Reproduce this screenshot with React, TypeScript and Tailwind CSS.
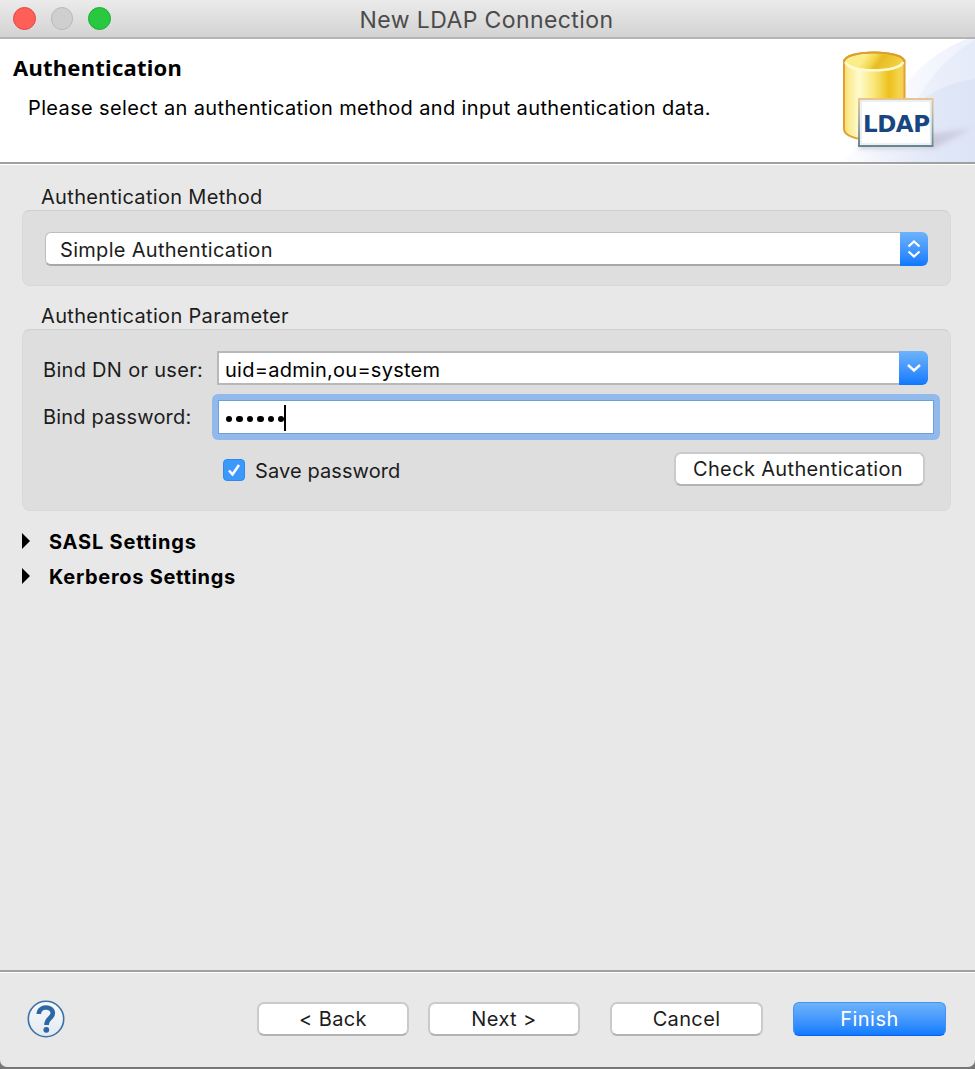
import React from "react";

function LdapBanner() {
  return (
    <svg width="200" height="123" viewBox="0 0 200 123" className="block">
      <defs>
        <linearGradient id="swoosh" gradientUnits="userSpaceOnUse" x1="70" y1="0" x2="200" y2="0">
          <stop offset="0" stopColor="#ffffff" />
          <stop offset="0.5" stopColor="#f7f9fe" />
          <stop offset="1" stopColor="#edf1fb" />
        </linearGradient>
        <linearGradient id="swoosh2" gradientUnits="userSpaceOnUse" x1="90" y1="0" x2="200" y2="0">
          <stop offset="0" stopColor="#e3e9f8" stopOpacity="0" />
          <stop offset="1" stopColor="#e3e9f8" />
        </linearGradient>
        <linearGradient id="swoosh3" gradientUnits="userSpaceOnUse" x1="60" y1="0" x2="190" y2="0">
          <stop offset="0" stopColor="#dae2f5" stopOpacity="0" />
          <stop offset="1" stopColor="#dae2f5" />
        </linearGradient>
        <linearGradient id="body" x1="0" x2="1">
          <stop offset="0" stopColor="#f8dd6c" />
          <stop offset="0.08" stopColor="#fbeb92" />
          <stop offset="0.25" stopColor="#fffbcf" />
          <stop offset="0.5" stopColor="#f9e678" />
          <stop offset="0.75" stopColor="#edc01c" />
          <stop offset="0.9" stopColor="#f5d34a" />
          <stop offset="1" stopColor="#f3cf58" />
        </linearGradient>
        <linearGradient id="lid" x1="0" x2="1" y1="0.3" y2="0.5">
          <stop offset="0" stopColor="#fbee8a" />
          <stop offset="0.3" stopColor="#fbee8a" />
          <stop offset="0.48" stopColor="#f3d84c" />
          <stop offset="0.6" stopColor="#e8bb22" />
          <stop offset="1" stopColor="#f4d544" />
        </linearGradient>
        <linearGradient id="card" x1="0" x2="0" y1="0" y2="1">
          <stop offset="0" stopColor="#e9c48f" />
          <stop offset="0.45" stopColor="#a9b3a6" />
          <stop offset="1" stopColor="#68878b" />
        </linearGradient>
        <linearGradient id="shade" x1="0" x2="1">
          <stop offset="0" stopColor="#9d98b0" />
          <stop offset="1" stopColor="#b9b0c8" stopOpacity="0.4" />
        </linearGradient>
        <filter id="soft" x="-30%" y="-60%" width="160%" height="220%">
          <feGaussianBlur stdDeviation="2.5" />
        </filter>
      </defs>
      <path d="M200 0H192C165 10 140 29 126 54L60 123H200Z" fill="url(#swoosh)" />
      <path d="M200 1C175 14 148 44 134 76L90 123H200Z" fill="url(#swoosh2)" opacity="0.8" />
      <path d="M200 40C174 43 150 55 133 72L64 123H200Z" fill="url(#swoosh3)" opacity="0.75" />
      <path d="M155 95L196 89L182 98L160 109H84V106H150Z" fill="url(#shade)" opacity="0.8" filter="url(#soft)" />
      <path d="M69 23C69 17 82 13.500 99 13.500S129.500 17 129.500 23V91C129 98 116 101 99 101S69 97 69 90Z" fill="url(#body)" stroke="#e1a030" strokeWidth="2" />
      <ellipse cx="99" cy="23" rx="29" ry="8.500" fill="url(#lid)" />
      <path d="M70.500 23C72 34 126 34 128 23" fill="none" stroke="#fffad6" strokeWidth="2.600" />
      <path d="M69 23C69 17 82 13.500 99 13.500S129.500 17 129.500 23" fill="none" stroke="#dc9f2c" strokeWidth="2" />
      <rect x="84" y="60" width="73.500" height="47" fill="#fff" stroke="url(#card)" strokeWidth="2" />
      <rect x="86" y="62" width="69.500" height="43" fill="none" stroke="#e4ebf2" strokeWidth="1.500" />
      <text x="88" y="93" textLength="67" fontFamily="'DejaVu Sans', sans-serif" fontWeight="700" fontSize="23" fill="#174680">LDAP</text>
    </svg>
  );
}

function PushButton({ children, className }: { children: React.ReactNode; className: string }) {
  return (
    <button
      className={
        "flex shrink-0 items-center justify-center rounded-[7px] border-2 border-[#cacaca] border-b-[#b3b3b3] bg-white h-[34px] " +
        className
      }
    >
      {children}
    </button>
  );
}

function Disclosure({ children }: { children: React.ReactNode }) {
  return (
    <div className="flex h-[35px] items-center pl-[22px] font-bold">
      <svg width="8" height="16" viewBox="0 0 8 16" className="-mt-[2px]">
        <path d="M0 0L8 8L0 16Z" fill="#000" />
      </svg>
      <div className="ml-[19px]">{children}</div>
    </div>
  );
}

export default function App() {
  return (
    <div className="flex h-[1069px] w-[975px] flex-col overflow-hidden bg-[#777] font-['Inter',sans-serif] text-[20px] leading-[24px] text-[#1c1c1c]">
      <div className="flex h-[1067px] flex-col overflow-hidden rounded-b-[7px] bg-[#e8e8e8]">
        <header className="grid h-[39px] shrink-0 grid-cols-[1fr_auto_1fr] items-center border-b-2 border-[#b4b4b4] bg-linear-to-b from-[#ebebeb] to-[#d3d3d3]">
          <div className="flex gap-[15px] pl-[13px]">
            <span className="size-[22.500px] rounded-full border border-[#e2463f] bg-[#ff5f57]" />
            <span className="size-[22.500px] rounded-full border border-[#b9b9b9] bg-[#cfcfcf]" />
            <span className="size-[22.500px] rounded-full border border-[#1dad2b] bg-[#28c940]" />
          </div>
          <h1 className="relative top-px -ml-[2px] text-[23px] tracking-[0.4px] text-[#4b4b4b]">New LDAP Connection</h1>
          <div />
        </header>

        <section className="flex h-[123px] shrink-0 justify-between bg-white">
          <div className="pt-[15px] pl-[13px] text-black">
            <h2 className="font-['Noto_Sans',sans-serif] text-[22px] leading-[26px] font-bold tracking-[0.25px]">Authentication</h2>
            <p className="mt-[16px] ml-[15px] whitespace-nowrap tracking-[0.365px]">
              Please select an authentication method and input authentication data.
            </p>
          </div>
          <LdapBanner />
        </section>

        <main className="flex min-h-0 grow flex-col border-t-2 border-[#a0a0a0] shadow-[inset_0_1px_0_#fff]">
          <h3 className="mt-[21px] mb-px ml-[41px] tracking-[0.320px]">Authentication Method</h3>
          <div className="mr-[24px] ml-[22px] h-[76px] rounded-[8px] border border-[#d9d9d9] border-t-[#cfcfcf] bg-[#dedede] pt-[21px] pr-[22px] pl-[22px]">
            <div className="flex h-[34px]">
              <div className="flex grow items-center rounded-l-[6px] border border-r-0 border-b-2 border-[#bdbdbd] border-b-[#a8a8a8] bg-white pt-[2px] pl-[14px] tracking-[0.3px]">
                Simple Authentication
              </div>
              <div className="flex w-[28px] items-center justify-center rounded-r-[6px] bg-linear-to-b from-[#6db3fa] to-[#0a78ff]">
                <svg width="14" height="20" viewBox="0 0 14 20" fill="none" stroke="#fff" strokeWidth="2.200">
                  <path d="M1.500 7.500L7 2.500L12.500 7.500M1.500 12.500L7 17.500L12.500 12.500" />
                </svg>
              </div>
            </div>
          </div>

          <h3 className="mt-[18px] mb-px ml-[41px] tracking-[0.330px]">Authentication Parameter</h3>
          <div className="mr-[24px] ml-[22px] h-[182px] rounded-[8px] border border-[#d9d9d9] border-t-[#cfcfcf] bg-[#dedede] pt-[21px] pl-[20px]">
            <div className="flex h-[34px] items-center">
              <label className="w-[174px] shrink-0 pt-[4px] tracking-[0.3px]">Bind DN or user:</label>
              <div className="mr-[22px] flex h-[34px] grow">
                <div className="flex grow items-center border-2 border-r-0 border-[#b8b8b8] bg-white pt-[3px] pl-[6px] tracking-[0.250px] text-black">
                  uid=admin,ou=system
                </div>
                <div className="flex w-[29px] items-center justify-center rounded-r-[6px] bg-linear-to-b from-[#6db3fa] to-[#0a78ff]">
                  <svg width="14" height="8" viewBox="0 0 14 8" fill="none" stroke="#fff" strokeWidth="2.400">
                    <path d="M1 1L7 6.500L13 1" />
                  </svg>
                </div>
              </div>
            </div>
            <div className="mt-[9px] flex h-[46px] items-center">
              <label className="w-[169px] shrink-0 tracking-[0.2px]">Bind password:</label>
              <div className="mr-[10px] flex h-[46px] grow rounded-[6px] bg-[#92b9ec] p-[6px]">
                <div className="flex grow items-center border border-[#6f9fd8] bg-white pt-[3px] pl-[7px]">
                  <div className="flex gap-[4px] pt-px">
                    {[0, 1, 2, 3, 4, 5].map((i) => (
                      <span key={i} className="size-[6.400px] rounded-full bg-black" />
                    ))}
                  </div>
                  <span className="-mt-[2px] h-[26px] w-[2px] bg-black" />
                </div>
              </div>
            </div>
            <div className="mt-[12px] flex h-[34px] pl-[180px]">
              <span className="mt-[7px] flex size-[22px] items-center justify-center rounded-[4px] border border-[#3089f3] bg-[#3b99fc]">
                <svg width="14" height="14" viewBox="0 0 14 14" fill="none" stroke="#fff" strokeWidth="2.600">
                  <path d="M2 7.500L5.500 11.500L12 2" />
                </svg>
              </span>
              <span className="mt-[7px] ml-[10px] tracking-[0.1px]">Save password</span>
              <PushButton className="mr-[25px] ml-auto w-[251px] pr-[3px] tracking-[0.350px]">Check Authentication</PushButton>
            </div>
          </div>

          <div className="mt-[13px] text-black">
            <Disclosure><span className="tracking-[0.800px]">SASL Settings</span></Disclosure>
            <Disclosure><span className="tracking-[0.700px]">Kerberos Settings</span></Disclosure>
          </div>
        </main>

        <footer className="flex h-[97px] shrink-0 items-start border-t-2 border-[#a0a0a0] pt-[30px] pr-[29px] pl-[27px] shadow-[inset_0_1px_0_#fff]">
          <svg width="38" height="38" viewBox="0 0 38 38" className="-mt-[2px]">
            <defs>
              <linearGradient id="help" x1="0" x2="0" y1="0" y2="1">
                <stop offset="0" stopColor="#f7fafc" />
                <stop offset="1" stopColor="#e3eaf0" />
              </linearGradient>
            </defs>
            <circle cx="19" cy="19" r="17.700" fill="url(#help)" stroke="#3b71a8" strokeWidth="1.600" />
            <path d="M11.800 14C11.800 5.500 25.800 5.500 25.800 13C25.800 18.500 19.500 17.500 19.500 25" fill="none" stroke="#2e68a4" strokeWidth="4.600" />
            <circle cx="19.300" cy="29.800" r="2.900" fill="#2e68a4" />
          </svg>
          <PushButton className="ml-auto w-[152px] tracking-[0.4px]">&lt; Back</PushButton>
          <PushButton className="ml-[19px] w-[152px] tracking-[0.4px]">Next &gt;</PushButton>
          <PushButton className="ml-[30px] w-[153px] tracking-[0.350px]">Cancel</PushButton>
          <button className="ml-[30px] flex h-[34px] w-[153px] items-center justify-center rounded-[6px] border border-[#4393f5] border-b-[#0a5cf5] bg-linear-to-b from-[#6db3fa] to-[#0a7bff] tracking-[0.5px] text-white">
            Finish
          </button>
        </footer>
      </div>
    </div>
  );
}
